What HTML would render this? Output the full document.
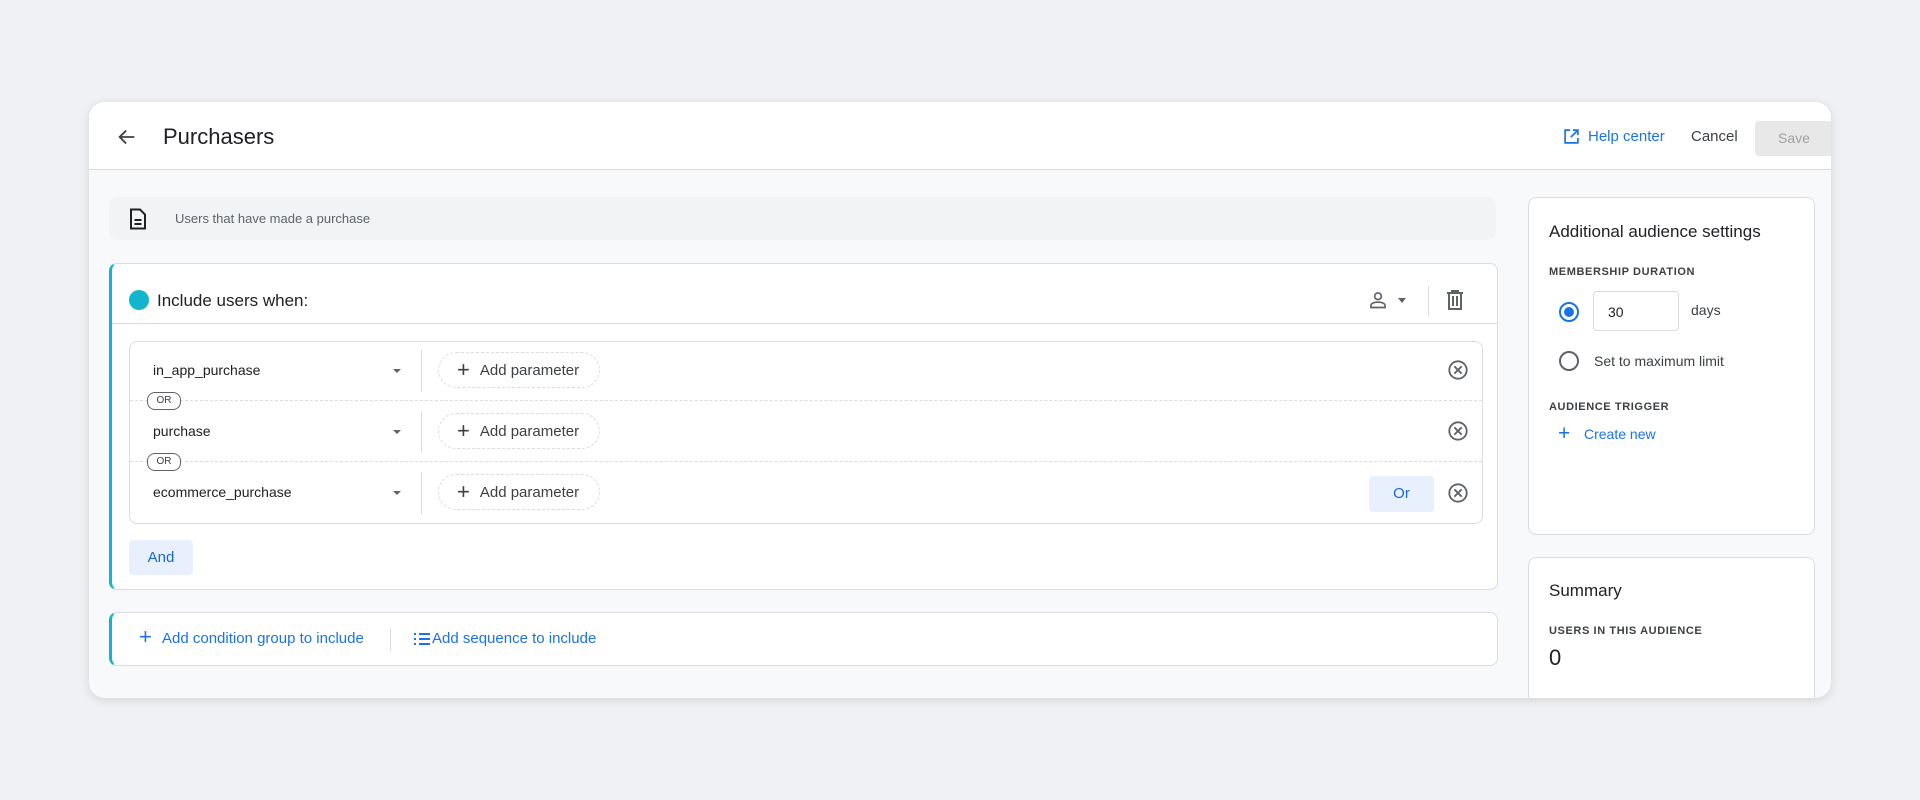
<!DOCTYPE html>
<html><head><meta charset="utf-8"><style>
*{box-sizing:border-box;margin:0;padding:0}
body{width:1920px;height:800px;background:#eff1f4;font-family:"Liberation Sans",Arial,sans-serif;position:relative;overflow:hidden;color:#202124}
.abs{position:absolute}
.card{left:89px;top:102px;width:1742px;height:596px;border-radius:16px;background:#f8f9fa;box-shadow:0 2px 10px rgba(0,0,0,.12);overflow:hidden}
.hdr{left:0;top:0;width:1742px;height:68px;background:#fff;border-bottom:1px solid #dadce0}
.blue{color:#1a73e8}
.box{background:#fff;border:1px solid #dadce0;border-radius:8px}
.pill{border:1px dashed #dadce0;border-radius:18px;height:36px;width:162px;font-size:15px;color:#3c4043;display:flex;align-items:center;padding-left:18px}
.pill b{font-weight:normal;font-size:22px;margin-right:10px;color:#3c4043}
.ev{font-size:14px;color:#202124}
.caret{width:0;height:0;border-left:4px solid transparent;border-right:4px solid transparent;border-top:5px solid #5f6368}
.or{width:34px;height:18px;border:1.5px solid #5f6368;border-radius:8px;font-size:10px;text-align:center;line-height:15px;background:#fff;color:#3c4043}
.cap{font-size:11px;letter-spacing:.6px;color:#3c4043;font-weight:bold}
</style></head><body>
<div class="abs card">
 <div class="abs hdr">
  <svg class="abs" style="left:27px;top:24px" width="22" height="22" viewBox="0 0 24 24"><path d="M20 12H5M11 5l-7 7 7 7" fill="none" stroke="#3c4043" stroke-width="2"/></svg>
  <div class="abs" style="left:74px;top:22px;font-size:22px;color:#202124">Purchasers</div>
  <svg class="abs" style="left:1474px;top:26px" width="17" height="17" viewBox="0 0 24 24"><path d="M10 3H3v18h18v-7M14 3h7v7M21 3L11 13" fill="none" stroke="#1a73e8" stroke-width="2.4"/></svg>
  <div class="abs blue" style="left:1499px;top:26px;font-size:15px">Help center</div>
  <div class="abs" style="left:1602px;top:26px;font-size:15px;color:#3c4043">Cancel</div>
  <div class="abs" style="left:1666px;top:19px;width:90px;height:35px;background:#e8e8e8;border-radius:4px;color:#a0a0a0;font-size:14px;padding:9px 0 0 23px">Save</div>
 </div>
 <div class="abs" style="left:20px;top:95px;width:1387px;height:43px;background:#f1f3f4;border-radius:8px">
  <svg class="abs" style="left:20px;top:11px" width="18" height="22" viewBox="0 0 18 22"><path d="M2 1.5h9l5 5v14H2z" fill="none" stroke="#202124" stroke-width="2"/><path d="M5.5 12h7M5.5 16h7" stroke="#202124" stroke-width="2"/></svg>
  <div class="abs" style="left:66px;top:14px;font-size:13px;color:#5f6368">Users that have made a purchase</div>
 </div>
 <div class="abs box" style="left:20px;top:161px;width:1389px;height:327px;border-left:3px solid #12b5cb">
  <div class="abs" style="left:17px;top:26px;width:20px;height:20px;border-radius:50%;background:#12b5cb"></div>
  <div class="abs" style="left:45px;top:27px;font-size:17px;color:#202124">Include users when:</div>
  <svg class="abs" style="left:1256px;top:26px" width="20" height="20" viewBox="0 0 24 24"><circle cx="12" cy="7.5" r="4" fill="none" stroke="#5f6368" stroke-width="2"/><path d="M3.5 21v-2c0-3 4-4.5 8.5-4.5s8.5 1.5 8.5 4.5v2z" fill="none" stroke="#5f6368" stroke-width="2"/></svg>
  <div class="abs caret" style="left:1286px;top:34px"></div>
  <div class="abs" style="left:1316px;top:22px;width:1px;height:30px;background:#dadce0"></div>
  <svg class="abs" style="left:1333px;top:26px" width="20" height="21" viewBox="0 0 20 21"><path d="M2 3h16M7 3V1h6v2M4 3v16h12V3M8 6v10M12 6v10" fill="none" stroke="#5f6368" stroke-width="2"/></svg>
  <div class="abs" style="left:0;top:59px;width:1386px;height:1px;background:#dadce0"></div>
  <div class="abs box" style="left:17px;top:77px;width:1354px;height:183px">
   <div class="abs" style="left:0;top:58px;width:1352px;border-top:1px dashed #dadce0"></div>
   <div class="abs" style="left:0;top:119px;width:1352px;border-top:1px dashed #dadce0"></div>
   <div class="abs or" style="left:17px;top:50px">OR</div>
   <div class="abs or" style="left:17px;top:111px">OR</div>
   <div class="abs ev" style="left:23px;top:20px">in_app_purchase</div>
   <div class="abs ev" style="left:23px;top:81px">purchase</div>
   <div class="abs ev" style="left:23px;top:142px">ecommerce_purchase</div>
   <div class="abs caret" style="left:263px;top:27px;border-top-width:4px"></div>
   <div class="abs caret" style="left:263px;top:88px;border-top-width:4px"></div>
   <div class="abs caret" style="left:263px;top:149px;border-top-width:4px"></div>
   <div class="abs" style="left:291px;top:8px;width:1px;height:42px;background:#dadce0"></div>
   <div class="abs" style="left:291px;top:69px;width:1px;height:42px;background:#dadce0"></div>
   <div class="abs" style="left:291px;top:130px;width:1px;height:42px;background:#dadce0"></div>
   <div class="abs pill" style="left:308px;top:10px"><b>+</b>Add parameter</div>
   <div class="abs pill" style="left:308px;top:71px"><b>+</b>Add parameter</div>
   <div class="abs pill" style="left:308px;top:132px"><b>+</b>Add parameter</div>
   <div class="abs" style="left:1239px;top:134px;width:65px;height:36px;background:#e8f0fe;border-radius:4px;color:#1967d2;font-size:15px;text-align:center;line-height:36px">Or</div>
   <svg class="abs" style="left:1317px;top:17px" width="22" height="22" viewBox="0 0 24 24"><circle cx="12" cy="12" r="9.5" fill="none" stroke="#5f6368" stroke-width="2"/><path d="M8 8l8 8M16 8l-8 8" stroke="#5f6368" stroke-width="2"/></svg>
   <svg class="abs" style="left:1317px;top:78px" width="22" height="22" viewBox="0 0 24 24"><circle cx="12" cy="12" r="9.5" fill="none" stroke="#5f6368" stroke-width="2"/><path d="M8 8l8 8M16 8l-8 8" stroke="#5f6368" stroke-width="2"/></svg>
   <svg class="abs" style="left:1317px;top:140px" width="22" height="22" viewBox="0 0 24 24"><circle cx="12" cy="12" r="9.5" fill="none" stroke="#5f6368" stroke-width="2"/><path d="M8 8l8 8M16 8l-8 8" stroke="#5f6368" stroke-width="2"/></svg>
  </div>
  <div class="abs" style="left:17px;top:276px;width:64px;height:35px;background:#e8f0fe;border-radius:4px;color:#1967d2;font-size:15px;text-align:center;line-height:35px">And</div>
 </div>
 <div class="abs box" style="left:20px;top:510px;width:1389px;height:54px;border-left:3px solid #12b5cb">
  <div class="abs blue" style="left:27px;top:11px;font-size:22px">+</div>
  <div class="abs blue" style="left:50px;top:17px;font-size:15px">Add condition group to include</div>
  <div class="abs" style="left:278px;top:15px;width:1px;height:23px;background:#dadce0"></div>
  <svg class="abs" style="left:302px;top:19px" width="16" height="15" viewBox="0 0 16 15"><path d="M0 2h2M0 7h2M0 12h2M5 2h11M5 7h11M5 12h11" stroke="#1a73e8" stroke-width="2"/></svg>
  <div class="abs blue" style="left:320px;top:17px;font-size:15px">Add sequence to include</div>
 </div>
 <div class="abs box" style="left:1439px;top:95px;width:287px;height:338px">
  <div class="abs" style="left:20px;top:24px;font-size:17px;color:#202124">Additional audience settings</div>
  <div class="abs cap" style="left:20px;top:68px">MEMBERSHIP DURATION</div>
  <div class="abs" style="left:30px;top:104px;width:20px;height:20px;border:2px solid #1a73e8;border-radius:50%"><div style="margin:3px;width:10px;height:10px;border-radius:50%;background:#1a73e8"></div></div>
  <div class="abs" style="left:64px;top:93px;width:86px;height:40px;border:1px solid #dadce0;border-radius:4px;font-size:14px;padding:12px 0 0 14px">30</div>
  <div class="abs" style="left:162px;top:104px;font-size:14px;color:#3c4043">days</div>
  <div class="abs" style="left:30px;top:153px;width:20px;height:20px;border:2px solid #5f6368;border-radius:50%"></div>
  <div class="abs" style="left:65px;top:155px;font-size:14px;color:#3c4043">Set to maximum limit</div>
  <div class="abs cap" style="left:20px;top:203px">AUDIENCE TRIGGER</div>
  <div class="abs blue" style="left:29px;top:224px;font-size:21px">+</div>
  <div class="abs blue" style="left:55px;top:228px;font-size:14px">Create new</div>
 </div>
 <div class="abs box" style="left:1439px;top:455px;width:287px;height:200px">
  <div class="abs" style="left:20px;top:23px;font-size:17px;color:#202124">Summary</div>
  <div class="abs cap" style="left:20px;top:67px">USERS IN THIS AUDIENCE</div>
  <div class="abs" style="left:20px;top:87px;font-size:22px;color:#202124">0</div>
 </div>
</div>
</body></html>
